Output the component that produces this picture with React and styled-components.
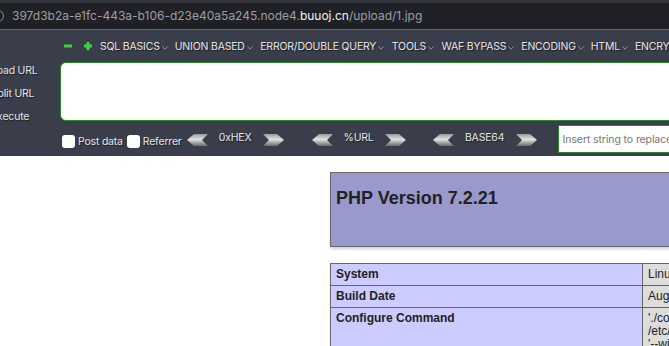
import React from "react";
import styled, { createGlobalStyle } from "styled-components";

const Global = createGlobalStyle`
  html, body { margin: 0; padding: 0; overflow: hidden; background: #fff; }
  body { width: 669px; height: 346px; font-family: "Liberation Sans", Arial, sans-serif; }
  * { box-sizing: border-box; }
`;

const Page = styled.div`
  width: 669px;
  height: 346px;
  overflow: hidden;
  display: flex;
  flex-direction: column;
`;

const AddressBar = styled.div`
  height: 30px;
  flex: none;
  background: #1f2126;
  border-top: 3px solid #33363d;
  border-bottom: 1px solid #1a9a1a;
  display: flex;
  align-items: center;
  padding-bottom: 1px;
  font-family: Inter, "Noto Sans", sans-serif;
  font-size: 12px;
  color: #9b9da4;
  white-space: nowrap;
`;

const SiteIcon = styled.span`
  width: 12px;
  height: 12px;
  border: 1.3px solid #8d8f96;
  border-radius: 50%;
  margin-left: -8px;
  margin-right: 8px;
  flex: none;
`;

const Host = styled.span`
  color: #f2f2f2;
`;

const Hackbar = styled.div`
  flex: none;
  height: 126px;
  background: #3a3e4b;
  border-bottom: 1px solid #175a17;
  display: flex;
  font-family: Inter, "Noto Sans", sans-serif;
  font-size: 10.5px;
  letter-spacing: -0.2px;
  color: #e6e6e6;
  overflow: hidden;
`;

const Labels = styled.div`
  width: 60px;
  flex: none;
  padding-top: 29px;
  margin-left: -9px;
  margin-right: 9px;
  display: flex;
  flex-direction: column;
`;

const Label = styled.div`
  height: 23px;
  line-height: 23px;
  white-space: nowrap;
  text-shadow: 1px 1px 1px rgba(0, 0, 0, 0.55);
`;

const Main = styled.div`
  flex: 1;
  margin-right: -20px;
  display: flex;
  flex-direction: column;
`;

const MenuRow = styled.div`
  height: 33px;
  display: flex;
  align-items: center;
  padding-left: 4px;
  white-space: nowrap;
`;

const MenuIcon = styled.svg`
  flex: none;
  margin-right: ${(p) => p.$gap}px;
`;

const MenuItem = styled.div`
  display: flex;
  align-items: center;
  margin-right: ${(p) => p.$gap}px;
  text-shadow: 1px 1px 1px rgba(0, 0, 0, 0.6);
`;

const Caret = styled.svg`
  margin-left: 2px;
  margin-top: 3px;
`;

const UrlBox = styled.div`
  height: 60px;
  background: #fff;
  border: 1px solid #2a8a2a;
  border-radius: 6px 0 0 6px;
`;

const BottomRow = styled.div`
  flex: 1;
  display: flex;
  align-items: center;
  padding-left: 2px;
  padding-top: 4px;
  white-space: nowrap;
`;

const Check = styled.span`
  width: 13px;
  height: 13px;
  background: #fff;
  border-radius: 3px;
  flex: none;
  margin-right: 3px;
  margin-top: 2px;
`;

const CheckLabel = styled.span`
  margin-right: ${(p) => p.$gap}px;
  margin-top: 2px;
  text-shadow: 1px 1px 1px rgba(0, 0, 0, 0.55);
`;

const Encoder = styled.div`
  display: flex;
  align-items: center;
  margin-right: ${(p) => p.$gap}px;
`;

const EncLabel = styled.span`
  width: ${(p) => p.$w}px;
  text-align: center;
  margin-top: -5px;
  text-shadow: 1px 1px 1px rgba(0, 0, 0, 0.55);
`;

const ReplaceInput = styled.div`
  flex: 1;
  height: 28px;
  background: #fff;
  border: 1px solid #2a8a2a;
  display: flex;
  align-items: center;
  padding-left: 4px;
  color: #777;
  font-size: 10.5px;
  letter-spacing: -0.1px;
  margin-bottom: 2px;
`;

const Content = styled.div`
  flex: 1;
  padding-left: 330px;
  padding-top: 16px;
  color: #222;
  font-family: "Liberation Sans", Arial, sans-serif;
`;

const Table = styled.table`
  border-collapse: collapse;
  width: 934px;
  box-shadow: 1px 2px 3px #ccc;
  margin-bottom: 16px;
  table-layout: fixed;
`;

const Cell = styled.td`
  border: 1px solid #666;
  font-size: 12px;
  padding: 4px 5px;
  vertical-align: baseline;
  line-height: 13px;
  background: ${(p) => (p.$kind === "e" ? "#ccf" : p.$kind === "h" ? "#99c" : "#ddd")};
  font-weight: ${(p) => (p.$kind === "v" ? "normal" : "bold")};
  width: ${(p) => (p.$kind === "e" ? "312px" : "auto")};
  height: ${(p) => p.$h || 22}px;
  white-space: nowrap;
  overflow: hidden;
`;

const Title = styled.h1`
  font-size: 18px;
  margin: 0;
  padding-top: 11px;
  line-height: 21px;
`;

const Line = styled.div``;

function Arrow({ dir }) {
  const pts =
    dir === "left"
      ? "0,6 7,0 21,0 15,6 21,12 7,12"
      : "0,0 14,0 21,6 14,12 0,12 6,6";
  const id = "g" + dir;
  return (
    <svg width="21" height="12" viewBox="0 0 21 12">
      <defs>
        <linearGradient id={id} x1="0" y1="0" x2="0" y2="1">
          <stop offset="0" stopColor="#9a9a9a" />
          <stop offset="0.45" stopColor="#e2e2e2" />
          <stop offset="1" stopColor="#6a6a6a" />
        </linearGradient>
      </defs>
      <polygon points={pts} fill={`url(#${id})`} />
    </svg>
  );
}

function CaretIcon() {
  return (
    <Caret width="6" height="4" viewBox="0 0 6 4">
      <polyline points="0.5,0.5 3,3.2 5.5,0.5" fill="none" stroke="#9a9ca3" strokeWidth="0.9" />
    </Caret>
  );
}

const menu = [
  ["SQL BASICS", 7],
  ["UNION BASED", 7.5],
  ["ERROR/DOUBLE QUERY", 7.5],
  ["TOOLS", 7.5],
  ["WAF BYPASS", 7],
  ["ENCODING", 7],
  ["HTML", 7],
  ["ENCRYPTION", 7],
];

export default function App() {
  return (
    <Page>
      <Global />
      <AddressBar>
        <SiteIcon />
        397d3b2a-e1fc-443a-b106-d23e40a5a245.node4.<Host>buuoj.cn</Host>/upload/1.jpg
      </AddressBar>
      <Hackbar>
        <Labels>
          <Label>Load URL</Label>
          <Label>Split URL</Label>
          <Label>Execute</Label>
        </Labels>
        <Main>
          <MenuRow>
            <MenuIcon width="8" height="4" viewBox="0 0 8 4" $gap={12}>
              <rect x="0" y="0.5" width="8" height="3" fill="#3fd43f" />
            </MenuIcon>
            <MenuIcon width="8" height="8" viewBox="0 0 8 8" $gap={8}>
              <rect x="2.5" y="0" width="3" height="8" fill="#3fd43f" />
              <rect x="0" y="2.5" width="8" height="3" fill="#3fd43f" />
              <circle cx="4" cy="4" r="2.3" fill="#3fd43f" />
            </MenuIcon>
            {menu.map(([t, g]) => (
              <MenuItem key={t} $gap={g}>
                {t}
                <CaretIcon />
              </MenuItem>
            ))}
          </MenuRow>
          <UrlBox />
          <BottomRow>
            <Check />
            <CheckLabel $gap={4}>Post data</CheckLabel>
            <Check />
            <CheckLabel $gap={5}>Referrer</CheckLabel>
            <Encoder $gap={28}>
              <Arrow dir="left" />
              <EncLabel $w={55}>0xHEX</EncLabel>
              <Arrow dir="right" />
            </Encoder>
            <Encoder $gap={27}>
              <Arrow dir="left" />
              <EncLabel $w={52}>%URL</EncLabel>
              <Arrow dir="right" />
            </Encoder>
            <Encoder $gap={21}>
              <Arrow dir="left" />
              <EncLabel $w={62}>BASE64</EncLabel>
              <Arrow dir="right" />
            </Encoder>
            <ReplaceInput>Insert string to replace</ReplaceInput>
          </BottomRow>
        </Main>
      </Hackbar>
      <Content>
        <Table>
          <tbody>
            <tr>
              <Cell $kind="h" $h={74} colSpan={2}>
                <Title>PHP Version 7.2.21</Title>
              </Cell>
            </tr>
          </tbody>
        </Table>
        <Table>
          <tbody>
            <tr>
              <Cell $kind="e">System</Cell>
              <Cell $kind="v">Linux 4bd6a1f0c3e2 4.15.0-54-generic #58-Ubuntu SMP x86_64</Cell>
            </tr>
            <tr>
              <Cell $kind="e">Build Date</Cell>
              <Cell $kind="v">Aug 30 2019 23:36:40</Cell>
            </tr>
            <tr>
              <Cell $kind="e" $h={60}>Configure Command</Cell>
              <Cell $kind="v" $h={60}>
                <Line>'./configure' '--build=x86_64-linux-gnu' '--with-config-file-path=/usr/local</Line>
                <Line>/etc/php' '--with-config-file-scan-dir=/usr/local/etc/php/conf.d'</Line>
                <Line>'--with-mhash' '--enable-ftp' '--enable-mbstring'</Line>
              </Cell>
            </tr>
          </tbody>
        </Table>
      </Content>
    </Page>
  );
}
